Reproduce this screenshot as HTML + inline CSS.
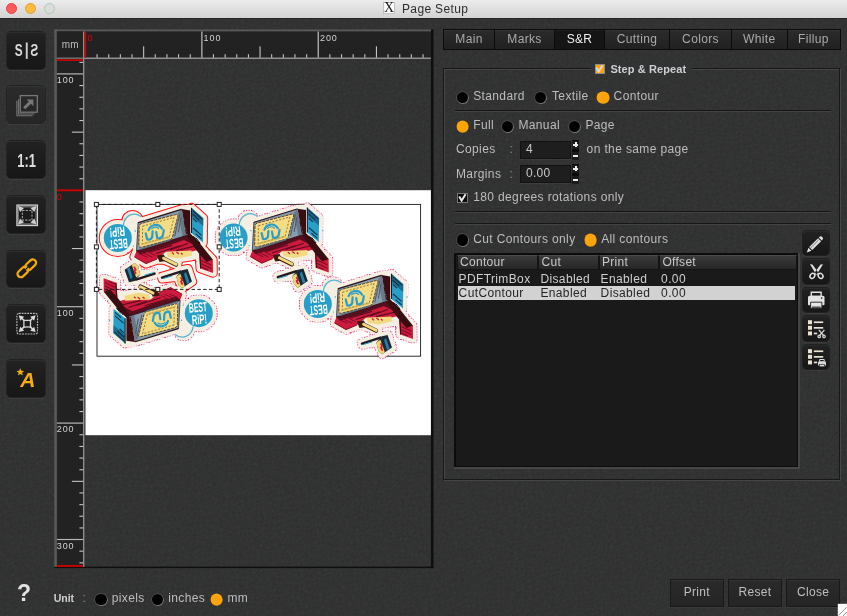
<!DOCTYPE html>
<html lang="en">
<head>
<meta charset="utf-8">
<title>Page Setup</title>
<style>
*{box-sizing:border-box;margin:0;padding:0}
html,body{width:847px;height:616px;overflow:hidden}
body{position:relative;font-family:"Liberation Sans",sans-serif;font-size:12px;color:#bdbdbd;background:#323334}
.abs,.abs>*{position:absolute}
#titlebar{position:absolute;left:0;top:0;width:847px;height:18px;background:linear-gradient(#ececec,#d3d3d3);box-shadow:0 1px 0 rgba(0,0,0,.22)}
#titlebar i{position:absolute;top:2.5px;width:11px;height:11px;border-radius:50%}
#title{position:absolute;left:402px;top:1px;font-size:12px;letter-spacing:.35px;color:#2e2e2e;line-height:16px;white-space:nowrap}
#xicon{position:absolute;left:382.6px;top:1.8px;width:12.8px;height:12.6px;background:#fbfbfb;border:1px solid #c0c0c0;font-family:"Liberation Serif",serif;font-size:14px;line-height:10.5px;color:#1c1c1c;text-align:center}
/* left toolbar */
.tb{position:absolute;left:7px;width:38.2px;height:36.8px;margin-top:.4px;border-radius:3.5px;background:linear-gradient(#222223,#171718);box-shadow:0 0 0 .7px #1c1c1c,0 1px 1px 1px rgba(255,255,255,.06),inset 0 1px 0 rgba(255,255,255,.05)}
.tb.dis{background:linear-gradient(#2b2b2c,#262627)}
.tb svg{position:absolute;left:-.5px;top:-.3px}
.tbt{position:absolute;left:0;width:39px;text-align:center;font-weight:bold;color:#d8d8d8}
/* frame with rulers */
.lbl{position:absolute;font-size:9px;letter-spacing:.9px;color:#d0d0d0;line-height:9px;white-space:nowrap}
/* right panel */
.t12{position:absolute;white-space:nowrap;line-height:14px;font-size:12px;letter-spacing:.37px}
.tab{position:absolute;top:29px;height:21px;background:linear-gradient(#2b2b2c,#212122);border:1.4px solid #0b0b0b;border-right-width:0;text-align:center;line-height:18px;color:#a9a9a9;letter-spacing:.35px;box-shadow:inset 0 1px 0 rgba(255,255,255,.04)}
.tab.sel{background:#151515;color:#f0f0f0}
.radio{position:absolute;width:11.4px;height:11.4px;margin:.7px .3px 0 .4px;border-radius:50%;background:#000;box-shadow:0 0 0 .7px rgba(120,120,120,.45),.5px .7px 0 .3px rgba(190,190,190,.5)}
.radio.on{background:#ffa30a;box-shadow:0 0 0 .4px #ffa30a,.4px .6px 0 .4px rgba(190,130,40,.6)}
.sep{position:absolute;height:2px;border-top:1px solid #161616;border-bottom:1px solid #424242}
.inp{position:absolute;left:520px;width:51px;height:18px;background:#1e1e1e;border:1px solid #121212;box-shadow:0 1px 0 rgba(255,255,255,.05);color:#c8c8c8;padding-left:5px;line-height:15px;letter-spacing:.3px}
.spin{position:absolute;left:572px;width:7px;height:19.6px;background:#0a0a0a}
.spin b{position:absolute;left:0;width:7px;height:8px;background:#1b1b1b}
.spin b:before{content:"";position:absolute;left:1px;top:3px;width:5px;height:2px;background:#ececec}
.spin b.p:after{content:"";position:absolute;left:2.5px;top:1.4px;width:2px;height:5.2px;background:#ececec}
.ib{position:absolute;left:803.4px;width:25.8px;height:24.4px;border-radius:3.5px;background:linear-gradient(#222223,#171718);box-shadow:0 0 0 1px #202020,0 1px 1px 1px rgba(255,255,255,.05),inset 0 1px 0 rgba(255,255,255,.04)}
.ib svg{position:absolute;left:0;top:0}
.btn{position:absolute;top:578.5px;height:28px;width:53.5px;background:linear-gradient(#2a2a2b,#252526);border:1px solid #191919;box-shadow:inset 0 1px 0 rgba(255,255,255,.05),0 1px 0 rgba(255,255,255,.04);text-align:center;line-height:25px;color:#bebebe;letter-spacing:.3px}
.th{position:absolute;top:255px;height:14.5px;background:linear-gradient(#3a3a3a,#262626);border:1px solid #141414;border-top-color:#4a4a4a;color:#c8c8c8;padding-left:2.4px;line-height:12px;letter-spacing:.3px;white-space:nowrap;overflow:hidden}
</style>
</head>
<body>
<div id="root" style="position:absolute;left:0;top:0;width:847px;height:616px;will-change:transform">
<svg style="position:absolute;left:0;top:0" width="847" height="616" viewBox="0 0 847 616"><filter id="nz" x="0" y="0" width="100%" height="100%" color-interpolation-filters="sRGB"><feTurbulence type="fractalNoise" baseFrequency=".28 .62" numOctaves="2" seed="7"/><feColorMatrix type="matrix" values=".075 0 0 0 .159  .075 0 0 0 .161  .075 0 0 0 .163  0 0 0 0 1"/></filter><g transform="rotate(-45 423 308)"><rect x="-120" y="-240" width="1100" height="1100" filter="url(#nz)"/></g></svg>
<!-- TITLE BAR -->
<div id="titlebar">
 <i style="left:6px;background:#fc5b57;border:.5px solid #e2443f"></i>
 <i style="left:25px;background:#fdbc40;border:.5px solid #e0a030"></i>
 <i style="left:43.5px;background:#dcdcdc;border:1px solid #a8cdb0"></i>
 <div id="xicon">X</div>
 <div id="title">Page Setup</div>
</div>

<!-- LEFT TOOLBAR -->
<div id="toolbar">
<div class="tb" style="top:31.4px"><svg width="39" height="38" viewBox="0 0 39 38"><text transform="translate(7.8,25.4) scale(.74,1)" font-family="Liberation Sans, sans-serif" font-weight="bold" font-size="16" fill="#dadada">S</text><rect x="18.8" y="11.5" width="1.9" height="16.4" fill="#cfcfcf"/><text transform="translate(31.2,25.4) scale(-.74,1)" font-family="Liberation Sans, sans-serif" font-weight="bold" font-size="16" fill="#dadada">S</text></svg></div>
<div class="tb dis" style="top:86.1px"><svg width="39" height="38" viewBox="0 0 39 38" fill="none" stroke="#777" stroke-width="1.3"><rect x="13.3" y="9.6" width="17" height="16.6"/><path d="M11.6 13.2V28H27.5M9.9 14.8V29.7H25.6" stroke-width="1.1"/><path d="M17.2 22.3L24.2 15.4" stroke-width="3"/><path d="M19.6 13.5H26.4V20.3Z" fill="#777" stroke="none"/></svg></div>
<div class="tb" style="top:140.8px"><svg width="39" height="38" viewBox="0 0 39 38"><text transform="translate(10.2,26.2) scale(.72,1)" font-family="Liberation Sans, sans-serif" font-weight="bold" font-size="18" fill="#dcdcdc">1:1</text></svg></div>
<div class="tb" style="top:195.5px"><svg width="39" height="38" viewBox="0 0 39 38"><rect x="9.9" y="9" width="20.6" height="20.6" fill="#6a6a6a" stroke="#d6d6d6" stroke-width="1.1"/><path d="M15 11.6h10.4l3 3v9.6l-3 3H15l-3-3v-9.6z" fill="#1b1b1b"/><path d="M11 10.1l6 2-4 4zM29.4 10.1l-6 2 4 4zM11 28.5l6-2-4-4zM29.4 28.5l-6-2 4-4z" fill="#cfcfcf"/><rect x="15.4" y="14.5" width="9.6" height="9.6" fill="#1b1b1b" stroke="#9a9a9a" stroke-width="1.1" stroke-dasharray="2.2 1.2"/></svg></div>
<div class="tb" style="top:250.2px"><svg width="39" height="38" viewBox="0 0 39 38" fill="none" stroke="#f4a90a" stroke-width="2.3"><g transform="rotate(-43 19.8 18.3)"><rect x="8.3" y="15" width="12.4" height="6.6" rx="3.3"/><rect x="18.9" y="15" width="12.4" height="6.6" rx="3.3"/><path d="M17.2 18.3h5.2" stroke="#1d1d1e" stroke-width="1.1"/></g></svg></div>
<div class="tb" style="top:304.9px"><svg width="39" height="38" viewBox="0 0 39 38"><rect x="9.9" y="8.4" width="20.6" height="20.6" rx="2" fill="#1d1d1d" stroke="#bdbdbd" stroke-width="1.1" stroke-dasharray="1.8 1"/><path d="M13.5 12L26.9 25.4M26.9 12L13.5 25.4" stroke="#d4d4d4" stroke-width="1.6"/><path d="M11.8 10.3l5.4 1.4-4 4zM28.6 10.3l-5.4 1.4 4 4zM11.8 27.1l5.4-1.4-4-4zM28.6 27.1l-5.4-1.4 4-4z" fill="#dcdcdc"/><rect x="16.9" y="15.4" width="6.6" height="6.6" fill="#1d1d1d" stroke="#d4d4d4" stroke-width="1.3"/></svg></div>
<div class="tb" style="top:359.6px"><svg width="39" height="38" viewBox="0 0 39 38"><text x="13.2" y="27.2" font-family="Liberation Sans, sans-serif" font-weight="bold" font-style="italic" font-size="21" fill="#f7ac12">A</text><path d="M13.3 8.2l1.1 2.6 2.8.2-2.1 1.8.7 2.8-2.5-1.5-2.4 1.5.7-2.8-2.2-1.8 2.8-.2z" fill="#f7ac12"/></svg></div>
<div class="tbt" style="left:17px;top:581px;width:14px;font-size:23px;line-height:24px;color:#e2e2e2">?</div>
</div>

<!-- RULER FRAME + CANVAS -->
<svg id="frame" class="abs" style="position:absolute;left:54px;top:29px" width="381" height="540" viewBox="54 29 381 540" font-family="Liberation Sans, sans-serif">
<defs>
<pattern id="dotp" width="2.6" height="2.6" patternUnits="userSpaceOnUse"><rect width="2.6" height="2.6" fill="#000"/><rect width="1.5" height="1.5" fill="#fff"/></pattern>
<mask id="dotm" maskUnits="userSpaceOnUse" x="80" y="180" width="360" height="200"><rect x="80" y="180" width="360" height="200" fill="url(#dotp)"/></mask>
<g id="sil">
<circle cx="117.8" cy="238" r="14.2"/>
<circle cx="132.6" cy="221.4" r="6.6"/>
<path d="M136.5 251.1L138.1 222.4 181.6 209.1 190 208.6 191.4 207.6 203.4 218.2 203 242.6 200.5 246.5 212.8 259.5 213 272.9 200.3 268.5 199.4 254.5 192 256.4 178.5 258.6 177.4 265.6 163 259.6 157 260 146 263.8 134.2 257Z"/>
<path d="M161.6 276.6L177 272.2 181.9 270 188 268.8 192.4 281.6 182.2 288.4 177.4 277 162.2 278.8Z"/>
</g>
<g id="det" stroke-linejoin="round">
<path d="M123.4 225C124.4 216 133.6 210.6 141.6 216.8" fill="none" stroke="#3aa8cf" stroke-width="1.3" opacity=".85"/>
<circle cx="117.8" cy="238" r="14" fill="#279fc8"/>
<g transform="rotate(180 117.8 238)" font-family="Liberation Sans, sans-serif" font-weight="bold" font-size="13.6" fill="#fff" text-anchor="middle"><text transform="translate(117.4 236.8) rotate(-5) scale(.5 1)">BEST</text><text transform="translate(118.8 248.8) rotate(-5) scale(.56 1)">RiP!</text></g>
<!-- base -->
<path d="M136.5 251.1L187.5 235.2 199.6 243.1 200 249.5 192 251.5 166 251.8 157 259 146 263.8 134.2 257Z" fill="#cd1a3d"/>
<path d="M136.5 251.1L187.5 235.2 199.6 243.1 196 246 184 240 160 248.6 140 254.6Z" fill="#4a0d1a" opacity=".9"/>
<path d="M150 252L172 245.4M156 253.4L180 245.8M170 250L188 243.6M176 250.6L194 246.4" stroke="#5a0e1e" stroke-width="1.1"/>
<path d="M134.6 257L146 263.6 157 259" fill="none" stroke="#8a1028" stroke-width="1"/>
<!-- tray bits -->
<path d="M166 252L191.4 250.4 192 255.4 178.5 258.4 168 257Z" fill="#f2da80"/>
<path d="M172 252.6l2 1.6M176.4 252l2.6 2M181 253l1.6 1.4" stroke="#cd1a3d" stroke-width="1.3"/>
<path d="M156.8 255.6L164 254.4 166 261 159.5 262Z" fill="#3b1a10"/>
<path d="M163.4 258.4L176 264.6" stroke="#3b1a10" stroke-width="4.4" stroke-linecap="round"/>
<path d="M163.6 258.2L176.2 264.4" stroke="#f2da80" stroke-width="2.9" stroke-linecap="round"/>
<!-- arm + leg -->
<path d="M190 233.6L199.6 243.1 212.8 259.5 207 262.4 199.4 254 194 247 187.5 236Z" fill="#3a0d12"/>
<path d="M199 253.5L206 257.6 212.8 259.5 213 272.9 200.3 268.5Z" fill="#cd1a3d"/>
<path d="M199 253.5L206.5 262 212.8 259.5 205 255.6Z" fill="#3a0d12"/>
<path d="M201.4 260.6L211.6 265.2M201.4 263.8L211.6 268.6M201.6 267L208 270" stroke="#6e0c20" stroke-width="1"/>
<path d="M200 254L200.6 268.4" stroke="#3a0d12" stroke-width="1.2"/>
<!-- dark side -->
<path d="M181.6 209.1L190.2 210.4 190.2 233.6 199.6 243.1 194.5 244.6 186.6 236Z" fill="#3a0d12"/>
<!-- frame -->
<path d="M138.1 222.4L181.6 209.1 187.5 235.2 136.5 251.1Z" fill="#879cad"/>
<path d="M178 213.4L181.6 209.1 187.5 235.2 182.6 236.8Z" fill="#56616e" opacity=".6"/>
<path d="M183.4 214l1.2 6M184.2 221l1.4 7M185.6 229l1 5" stroke="#3a0d12" stroke-width="1.2"/>
<path d="M136.5 251.1L187.5 235.2" stroke="#33141a" stroke-width="1.2"/>
<path d="M138.1 222.4L136.5 251.1" stroke="#4a3a3a" stroke-width=".9"/>
<!-- screen -->
<path d="M141.6 223.4Q139.2 224.2 139.2 226.6L138.9 245.4Q139 248 141.6 247.2L170 239.6Q172 239 172.5 237L177.8 216.4Q178.4 213.8 175.8 214.6Z" fill="#f3dc84" stroke="#4e3418" stroke-width=".9" stroke-dasharray="3 1"/>
<path d="M142.6 226.2L174 217.4 169.4 236.6 142.4 243.8Z" fill="none" stroke="#7a5a2a" stroke-width=".8" stroke-dasharray="2 1.6"/>
<path d="M141 244.6L170 237" stroke="#c9a94e" stroke-width="1.6" opacity=".7"/>
<g fill="none" stroke="#2a9ecb" stroke-width="2.2" stroke-linecap="round"><path d="M148.6 230.2C150.4 224.2 158.4 222.8 162 228.6"/><path d="M151.6 228.8C153.6 226.8 156.8 226.6 158.6 228.4" stroke-width="1.2"/><path d="M145.8 233.4L147.2 239.4Q150.6 240.4 152.2 237L152.6 231.4"/><path d="M156.2 232L157.2 238Q160.8 239.2 162.8 235.6L163.8 230.2"/></g>
<!-- blue panel -->
<path d="M191.4 207.8L203.3 218.3 203 242.5 191.4 233Z" fill="#279fc8"/>
<path d="M191.4 207.8L203.3 218.3 203.2 226 191.4 216Z" fill="#14405c" opacity=".55"/>
<path d="M192.6 210.6L202 219M192.6 214L199.4 220.2M192.8 218.4L197 222.2M193 228L201.6 235.4M195.6 233.6L201.6 238.8" stroke="#12304a" stroke-width="1.1"/>
<path d="M191.5 207.8L191.5 233" stroke="#101c26" stroke-width="1.1"/>
<!-- tool -->
<path d="M162 277.6L180.6 271.6" stroke="#24171c" stroke-width="2.4" stroke-linecap="round"/>
<path d="M163 278.6L172 276" stroke="#279fc8" stroke-width="1"/>
<path d="M176.4 276.6L181.9 270.2 187.6 269 192 281.4 182 288.2 178.4 285Z" fill="#1a2836"/>
<path d="M186 272L189.6 282.4 187 284 184 274Z" fill="#279fc8" opacity=".75"/>
<path d="M176.4 276.6L180.4 273.8 184.8 286.2 182 288.2 178.4 285Z" fill="#f0d572"/>
<path d="M180.6 277.4l1.8 3-1.6 1 1.8 3.2" fill="none" stroke="#cd1a3d" stroke-width="1.7"/>
<g stroke="#2c1216" stroke-width="1" fill="none" stroke-linecap="round">
<path d="M138.4 222.6L181.4 209.4" stroke-width="1.1"/>
<path d="M179.4 215.4l-4.6 20.4M181 218l-2.6 14" stroke="#4b5866" stroke-width="1"/>
<path d="M140 249.4l30-9.4" stroke="#5f6f80" stroke-width="1.4"/>
<path d="M139 253.6l8 3.4M142 252.4l10 4.6M147 251.4l8 4" stroke="#7a0f26"/>
<path d="M196 238l4 5M193.6 236.4l5 6.6" stroke="#1a0608"/>
</g>
<g fill="#e0186a"><circle cx="128" cy="252.6" r=".7"/><circle cx="150.4" cy="267" r=".7"/><circle cx="196" cy="262" r=".7"/><circle cx="170" cy="268.4" r=".6"/><circle cx="209" cy="250" r=".6"/></g>
<g fill="#279fc8"><circle cx="135.2" cy="231" r=".7"/><circle cx="133.4" cy="246" r=".6"/><circle cx="207" cy="231" r=".7"/></g>
</g>
<g id="stk"><use href="#sil" fill="#f4efe2" stroke="#f4efe2" stroke-width="7.6" stroke-linejoin="round"/><use href="#det"/></g>
<g id="ringd"><use href="#sil" fill="#e0186a" stroke="#e0186a" stroke-width="9.8" stroke-linejoin="round" mask="url(#dotm)"/></g>
</defs><defs><pattern id="tex" width="6" height="6" patternUnits="userSpaceOnUse" patternTransform="rotate(-45)"><rect width="6" height="6" fill="#333434"/><rect width="6" height="1.5" fill="#3a3b3b" opacity=".28"/><rect y="3" width="6" height="1.2" fill="#2c2d2d" opacity=".3"/></pattern></defs>
<rect x="430.9" y="29.5" width="2.6" height="538.6" fill="#0f0f0f"/><rect x="54.3" y="566.6" width="379.2" height="1.5" fill="#0f0f0f"/>
<rect x="54.3" y="29.5" width="376.6" height="2.1" fill="#5a5a5a"/><rect x="54.3" y="29.5" width="2.7" height="537.3" fill="#5a5a5a"/>
<rect x="56.9" y="31.5" width="374" height="26.2" fill="#222"/>
<rect x="56.9" y="31.5" width="26.2" height="535.3" fill="#222"/>

<rect x="85.5" y="190.2" width="345.4" height="245" fill="#fff"/>
<rect x="84.2" y="57.6" width="346.7" height="1.2" fill="#a8a8a8"/>
<rect x="83.1" y="31.5" width="1.2" height="535.3" fill="#9c9c9c"/>
<rect x="56.9" y="57.6" width="26.2" height="1.1" fill="#8a8a8a"/>
<rect x="96.5" y="54.2" width="1.1" height="3.5" fill="#c4c4c4"/><rect x="108.2" y="54.2" width="1.1" height="3.5" fill="#c4c4c4"/><rect x="119.8" y="54.2" width="1.1" height="3.5" fill="#c4c4c4"/><rect x="131.5" y="54.2" width="1.1" height="3.5" fill="#c4c4c4"/><rect x="143.1" y="46.3" width="1.1" height="11.4" fill="#c4c4c4"/><rect x="154.7" y="54.2" width="1.1" height="3.5" fill="#c4c4c4"/><rect x="166.4" y="54.2" width="1.1" height="3.5" fill="#c4c4c4"/><rect x="178.0" y="54.2" width="1.1" height="3.5" fill="#c4c4c4"/><rect x="189.7" y="54.2" width="1.1" height="3.5" fill="#c4c4c4"/><rect x="201.2" y="31.5" width="1.3" height="26.2" fill="#b4b4b4"/><rect x="212.9" y="54.2" width="1.1" height="3.5" fill="#c4c4c4"/><rect x="224.6" y="54.2" width="1.1" height="3.5" fill="#c4c4c4"/><rect x="236.2" y="54.2" width="1.1" height="3.5" fill="#c4c4c4"/><rect x="247.9" y="54.2" width="1.1" height="3.5" fill="#c4c4c4"/><rect x="259.5" y="46.3" width="1.1" height="11.4" fill="#c4c4c4"/><rect x="271.1" y="54.2" width="1.1" height="3.5" fill="#c4c4c4"/><rect x="282.8" y="54.2" width="1.1" height="3.5" fill="#c4c4c4"/><rect x="294.4" y="54.2" width="1.1" height="3.5" fill="#c4c4c4"/><rect x="306.1" y="54.2" width="1.1" height="3.5" fill="#c4c4c4"/><rect x="317.6" y="31.5" width="1.3" height="26.2" fill="#b4b4b4"/><rect x="329.3" y="54.2" width="1.1" height="3.5" fill="#c4c4c4"/><rect x="341.0" y="54.2" width="1.1" height="3.5" fill="#c4c4c4"/><rect x="352.6" y="54.2" width="1.1" height="3.5" fill="#c4c4c4"/><rect x="364.3" y="54.2" width="1.1" height="3.5" fill="#c4c4c4"/><rect x="375.9" y="46.3" width="1.1" height="11.4" fill="#c4c4c4"/><rect x="387.5" y="54.2" width="1.1" height="3.5" fill="#c4c4c4"/><rect x="399.2" y="54.2" width="1.1" height="3.5" fill="#c4c4c4"/><rect x="410.8" y="54.2" width="1.1" height="3.5" fill="#c4c4c4"/><rect x="422.5" y="54.2" width="1.1" height="3.5" fill="#c4c4c4"/><rect x="79.4" y="61.8" width="3.8" height="1.1" fill="#c4c4c4"/><rect x="56.9" y="73.3" width="26.2" height="1.2" fill="#b4b4b4"/><rect x="79.4" y="85.0" width="3.8" height="1.1" fill="#c4c4c4"/><rect x="79.4" y="96.7" width="3.8" height="1.1" fill="#c4c4c4"/><rect x="79.4" y="108.3" width="3.8" height="1.1" fill="#c4c4c4"/><rect x="79.4" y="120.0" width="3.8" height="1.1" fill="#c4c4c4"/><rect x="71.9" y="131.6" width="11.4" height="1.1" fill="#c4c4c4"/><rect x="79.4" y="143.2" width="3.8" height="1.1" fill="#c4c4c4"/><rect x="79.4" y="154.9" width="3.8" height="1.1" fill="#c4c4c4"/><rect x="79.4" y="166.5" width="3.8" height="1.1" fill="#c4c4c4"/><rect x="79.4" y="178.2" width="3.8" height="1.1" fill="#c4c4c4"/><rect x="79.4" y="201.4" width="3.8" height="1.1" fill="#c4c4c4"/><rect x="79.4" y="213.1" width="3.8" height="1.1" fill="#c4c4c4"/><rect x="79.4" y="224.7" width="3.8" height="1.1" fill="#c4c4c4"/><rect x="79.4" y="236.4" width="3.8" height="1.1" fill="#c4c4c4"/><rect x="71.9" y="248.0" width="11.4" height="1.1" fill="#c4c4c4"/><rect x="79.4" y="259.6" width="3.8" height="1.1" fill="#c4c4c4"/><rect x="79.4" y="271.3" width="3.8" height="1.1" fill="#c4c4c4"/><rect x="79.4" y="282.9" width="3.8" height="1.1" fill="#c4c4c4"/><rect x="79.4" y="294.6" width="3.8" height="1.1" fill="#c4c4c4"/><rect x="56.9" y="306.1" width="26.2" height="1.2" fill="#b4b4b4"/><rect x="79.4" y="317.8" width="3.8" height="1.1" fill="#c4c4c4"/><rect x="79.4" y="329.5" width="3.8" height="1.1" fill="#c4c4c4"/><rect x="79.4" y="341.1" width="3.8" height="1.1" fill="#c4c4c4"/><rect x="79.4" y="352.8" width="3.8" height="1.1" fill="#c4c4c4"/><rect x="71.9" y="364.4" width="11.4" height="1.1" fill="#c4c4c4"/><rect x="79.4" y="376.0" width="3.8" height="1.1" fill="#c4c4c4"/><rect x="79.4" y="387.7" width="3.8" height="1.1" fill="#c4c4c4"/><rect x="79.4" y="399.3" width="3.8" height="1.1" fill="#c4c4c4"/><rect x="79.4" y="411.0" width="3.8" height="1.1" fill="#c4c4c4"/><rect x="56.9" y="422.5" width="26.2" height="1.2" fill="#b4b4b4"/><rect x="79.4" y="434.2" width="3.8" height="1.1" fill="#c4c4c4"/><rect x="79.4" y="445.9" width="3.8" height="1.1" fill="#c4c4c4"/><rect x="79.4" y="457.5" width="3.8" height="1.1" fill="#c4c4c4"/><rect x="79.4" y="469.2" width="3.8" height="1.1" fill="#c4c4c4"/><rect x="71.9" y="480.8" width="11.4" height="1.1" fill="#c4c4c4"/><rect x="79.4" y="492.4" width="3.8" height="1.1" fill="#c4c4c4"/><rect x="79.4" y="504.1" width="3.8" height="1.1" fill="#c4c4c4"/><rect x="79.4" y="515.7" width="3.8" height="1.1" fill="#c4c4c4"/><rect x="79.4" y="527.4" width="3.8" height="1.1" fill="#c4c4c4"/><rect x="56.9" y="538.9" width="26.2" height="1.2" fill="#b4b4b4"/><rect x="79.4" y="550.6" width="3.8" height="1.1" fill="#c4c4c4"/><rect x="79.4" y="562.3" width="3.8" height="1.1" fill="#c4c4c4"/>
<rect x="84.6" y="31.5" width="1.6" height="26.2" fill="#d40000"/>
<rect x="56.9" y="59.3" width="26.2" height="1.6" fill="#d40000"/>
<rect x="56.9" y="189.4" width="26.2" height="1.8" fill="#d40000"/>
<rect x="56.9" y="565" width="26.2" height="1.9" fill="#c80000"/>
<text x="61.8" y="47.5" font-size="10" letter-spacing=".1" fill="#bcbcbc">mm</text>
<text x="87.4" y="40.9" font-size="9" letter-spacing=".9" fill="#e00000">0</text>
<text x="203.6" y="40.9" font-size="9" letter-spacing=".9" fill="#d2d2d2">100</text>
<text x="320.0" y="40.9" font-size="9" letter-spacing=".9" fill="#d2d2d2">200</text>
<text x="56.8" y="83.1" font-size="9" letter-spacing=".9" fill="#d2d2d2">100</text>
<text x="56.8" y="199.5" font-size="9" letter-spacing=".9" fill="#e00000">0</text>
<text x="56.8" y="315.9" font-size="9" letter-spacing=".9" fill="#d2d2d2">100</text>
<text x="56.8" y="432.3" font-size="9" letter-spacing=".9" fill="#d2d2d2">200</text>
<text x="56.8" y="548.7" font-size="9" letter-spacing=".9" fill="#d2d2d2">300</text>
<g id="art">
<rect x="97" y="204.4" width="323.6" height="151.8" fill="none" stroke="#1a1a1a" stroke-width=".9"/>
<g transform="translate(200 66)"><use href="#ringd"/></g>
<g transform="translate(115.8 -.4)"><use href="#ringd"/></g>
<g transform="rotate(180 158.3 275.6)"><use href="#ringd"/></g>
<use href="#sil" fill="#ff1414" stroke="#ff1414" stroke-width="9.6" stroke-linejoin="round"/>
<g transform="translate(200 66)"><use href="#stk"/></g>
<g transform="translate(115.8 -.4)"><use href="#stk"/></g>
<g transform="rotate(180 158.3 275.6)"><use href="#stk"/></g>
<use href="#stk"/>
<rect x="96.4" y="204.4" width="122.8" height="85" fill="none" stroke="#222" stroke-width="1" stroke-dasharray="3.4 2.4"/>
<g fill="#fff" stroke="#222" stroke-width="1"><rect x="94.4" y="202.4" width="4" height="4"/><rect x="155.8" y="202.4" width="4" height="4"/><rect x="217.2" y="202.4" width="4" height="4"/><rect x="94.4" y="244.9" width="4" height="4"/><rect x="217.2" y="244.9" width="4" height="4"/><rect x="94.4" y="287.4" width="4" height="4"/><rect x="155.8" y="287.4" width="4" height="4"/><rect x="217.2" y="287.4" width="4" height="4"/></g>
</g>
</svg>

<!-- RIGHT PANEL -->
<div id="panel">
<div class="tab" style="left:443px;width:51px">Main</div>
<div class="tab" style="left:494px;width:60px">Marks</div>
<div class="tab sel" style="left:554px;width:50px">S&amp;R</div>
<div class="tab" style="left:604px;width:65px">Cutting</div>
<div class="tab" style="left:669px;width:62px">Colors</div>
<div class="tab" style="left:731px;width:55.5px">White</div>
<div class="tab" style="left:786.5px;width:54.0px;border-right-width:1px">Fillup</div>
<div style="position:absolute;left:443.2px;top:68px;width:397px;height:411.8px;border:1.2px solid #181818;box-shadow:inset 1px 1px 0 #454545,1px 1px 0 #454545"></div>
<div style="position:absolute;left:591px;top:62px;width:100px;height:14px;background:#323334"></div>
<div style="position:absolute;left:594.8px;top:63.7px;width:10.2px;height:10.2px;background:#ffa30a;border:1px solid #8a8a8a"><svg width="9" height="9" viewBox="0 0 9 9" style="position:absolute;left:-.4px;top:-.4px"><path d="M1.2 3.6L3.6 7.6 7.6 1.2" fill="none" stroke="#d8d8d8" stroke-width="2"/></svg></div>
<div class="t12" style="left:610.4px;top:62px;font-size:11px;font-weight:bold;color:#cfcfcf;letter-spacing:.1px">Step &amp; Repeat</div>
<div class="radio" style="left:456.5px;top:91.0px"></div>
<div class="t12" style="left:473.2px;top:89.1px">Standard</div>
<div class="radio" style="left:534.7px;top:91.0px"></div>
<div class="t12" style="left:552.0px;top:89.1px">Textile</div>
<div class="radio on" style="left:597.0px;top:91.0px"></div>
<div class="t12" style="left:613.6px;top:89.1px">Contour</div>
<div class="sep" style="left:454.5px;top:110px;width:376px"></div>
<div class="radio on" style="left:456.5px;top:120.2px"></div>
<div class="t12" style="left:473.2px;top:118.4px">Full</div>
<div class="radio" style="left:501.5px;top:120.2px"></div>
<div class="t12" style="left:518.4px;top:118.4px">Manual</div>
<div class="radio" style="left:568.5px;top:120.2px"></div>
<div class="t12" style="left:585.4px;top:118.4px">Page</div>
<div class="t12" style="left:456.0px;top:142.3px">Copies</div>
<div class="t12" style="left:509.5px;top:142.3px;color:#8c8c8c">:</div>
<div class="inp" style="top:141px">4</div><div class="spin" style="top:140px"><b class="p" style="top:.5px"></b><b style="top:11.5px"></b></div>
<div class="t12" style="left:586.6px;top:142.3px">on the same page</div>
<div class="t12" style="left:456.0px;top:166.6px">Margins</div>
<div class="t12" style="left:509.5px;top:166.6px;color:#8c8c8c">:</div>
<div class="inp" style="top:165px">0.00</div><div class="spin" style="top:164px"><b class="p" style="top:.5px"></b><b style="top:11.5px"></b></div>
<div style="position:absolute;left:457.4px;top:192.5px;width:10.2px;height:10.2px;background:#0a0a0a;border:1px solid #787878"><svg width="9" height="9" viewBox="0 0 9 9" style="position:absolute;left:-.4px;top:-.4px"><path d="M1.2 3.6L3.6 7.6 7.6 1.2" fill="none" stroke="#e8e8e8" stroke-width="2"/></svg></div>
<div class="t12" style="left:473.2px;top:189.7px">180 degrees rotations only</div>
<div class="sep" style="left:454.5px;top:211px;width:376px"></div>
<div class="sep" style="left:454.5px;top:222.8px;width:376px"></div>
<div class="radio" style="left:456.5px;top:233.5px"></div>
<div class="t12" style="left:473.2px;top:231.6px">Cut Contours only</div>
<div class="radio on" style="left:584.5px;top:233.5px"></div>
<div class="t12" style="left:601.2px;top:231.6px">All contours</div>
<div style="position:absolute;left:454.2px;top:253.2px;width:345.8px;height:215.7px;background:#464646"></div><div style="position:absolute;left:454.2px;top:253.2px;width:343.6px;height:213.6px;background:#1a1a1a;border:2px solid #0c0c0c;border-right-width:1px;border-bottom-width:1px"></div>
<div class="th" style="left:456.6px;width:81.6px">Contour</div>
<div class="th" style="left:538.2px;width:60.4px">Cut</div>
<div class="th" style="left:598.6px;width:60.4px">Print</div>
<div class="th" style="left:659px;width:137.6px">Offset</div>
<div style="position:absolute;left:458.2px;top:286.4px;width:337.2px;height:13.4px;background:#d2d2d2"></div>
<div class="t12" style="left:458.6px;top:272.0px;color:#cfcfcf">PDFTrimBox</div>
<div class="t12" style="left:540.4px;top:272.0px;color:#cfcfcf">Disabled</div>
<div class="t12" style="left:600.6px;top:272.0px;color:#cfcfcf">Enabled</div>
<div class="t12" style="left:661.1px;top:272.0px;color:#cfcfcf">0.00</div>
<div class="t12" style="left:458.6px;top:286.0px;color:#262626">CutContour</div>
<div class="t12" style="left:540.4px;top:286.0px;color:#262626">Enabled</div>
<div class="t12" style="left:600.6px;top:286.0px;color:#262626">Disabled</div>
<div class="t12" style="left:661.1px;top:286.0px;color:#262626">0.00</div>
<div class="ib" style="top:230.7px"><svg width="26.5" height="25" viewBox="0 0 26.5 25"><g transform="translate(3.8 21.4) scale(.86) translate(-4.2 -21.4)"><path d="M4.2 21.4l1.9-5.3 3.5 3.5zM7 15.2L17.3 4.9l3.5 3.5L10.5 18.7zM18.2 4l.5-.5a2.4 2.4 0 0 1 3.5 3.5l-.5.5z" fill="#e2e2e2"/><path d="M7.8 17.1L17.9 7" stroke="#444" stroke-width=".8"/></g></svg></div>
<div class="ib" style="top:259.2px"><svg width="26.5" height="25" viewBox="0 0 26.5 25"><path d="M7 5.2L9.4 5.6 16 14.6 13.6 16ZM20 5.2L17.6 5.6 11 14.6 13.4 16Z" fill="#e2e2e2"/><g fill="none" stroke="#e2e2e2" stroke-width="1.5"><ellipse cx="9.4" cy="16.9" rx="2.2" ry="2.7" transform="rotate(35 9.4 16.9)"/><ellipse cx="17.6" cy="16.9" rx="2.2" ry="2.7" transform="rotate(-35 17.6 16.9)"/></g></svg></div>
<div class="ib" style="top:287.7px"><svg width="26.5" height="25" viewBox="0 0 26.5 25"><path d="M8.3 4.3h9.8v4.2H8.3z" fill="none" stroke="#e4e4e4" stroke-width="1.4"/><path d="M5 9.3q0-1.6 1.6-1.6h13.3q1.6 0 1.6 1.6v6.9q0 1-1 1H6q-1 0-1-1z" fill="#e4e4e4"/><path d="M7.6 14.2h11.3v6H7.6z" fill="#e4e4e4" stroke="#1c1c1c" stroke-width=".9"/><rect x="9" y="18.6" width="8.6" height="1" fill="#1c1c1c"/><rect x="17.9" y="9.4" width="1.4" height="1.4" fill="#1c1c1c"/></svg></div>
<div class="ib" style="top:316.2px"><svg width="26.5" height="25" viewBox="0 0 26.5 25"><g fill="#e9e2d2"><rect x="5" y="4.2" width="4" height="4"/><rect x="5" y="9.8" width="4" height="4"/><rect x="5" y="15.4" width="4" height="4"/><rect x="10.8" y="5.4" width="9.4" height="1.7"/><rect x="10.8" y="11" width="9.4" height="1.7"/><rect x="10.8" y="16.6" width="3.4" height="1.7"/></g><g fill="none" stroke="#cfcfcf" stroke-width="1.3"><path d="M15.8 13.8L21 20M21.4 13.8L16.2 20"/><circle cx="16.2" cy="20.4" r="1.2"/><circle cx="21" cy="20.4" r="1.2"/></g></svg></div>
<div class="ib" style="top:344.7px"><svg width="26.5" height="25" viewBox="0 0 26.5 25"><g fill="#e9e2d2"><rect x="5" y="4.2" width="4" height="4"/><rect x="5" y="9.8" width="4" height="4"/><rect x="5" y="15.4" width="4" height="4"/><rect x="10.8" y="5.4" width="9.4" height="1.7"/><rect x="10.8" y="11" width="9.4" height="1.7"/><rect x="10.8" y="16.6" width="3.4" height="1.7"/></g><path d="M16.6 14.5h4.6v2.4h-4.6z" fill="none" stroke="#d8d8d8" stroke-width="1"/><path d="M15 17.2q0-.8.8-.8h6.4q.8 0 .8.8v3.2h-8z" fill="#d8d8d8"/><rect x="16.4" y="19.4" width="5.2" height="2.4" fill="#d8d8d8" stroke="#1c1c1c" stroke-width=".6"/></svg></div>
<div class="btn" style="left:670px">Print</div>
<div class="btn" style="left:728.2px">Reset</div>
<div class="btn" style="left:786.4px">Close</div>
<svg style="position:absolute;left:837px;top:603px" width="10" height="13" viewBox="0 0 10 13"><rect x=".8" y=".8" width="10" height="13" fill="#fafafa"/><path d="M1.5 12.5L10 4M6 13L10 9" stroke="#9a9a9a" stroke-width="1"/></svg>
<div class="t12" style="left:53.8px;top:591.2px;font-size:10.6px;font-weight:bold;color:#cfcfcf;letter-spacing:-.1px">Unit</div>
<div class="t12" style="left:82.6px;top:591.0px;color:#8c8c8c">:</div>
<div class="radio" style="left:94.8px;top:593.0px"></div>
<div class="t12" style="left:111.7px;top:591.4px">pixels</div>
<div class="radio" style="left:151.4px;top:593.0px"></div>
<div class="t12" style="left:168.2px;top:591.4px">inches</div>
<div class="radio on" style="left:210.5px;top:593.0px"></div>
<div class="t12" style="left:227.4px;top:591.4px">mm</div>
</div>

</div>
</body>
</html>
